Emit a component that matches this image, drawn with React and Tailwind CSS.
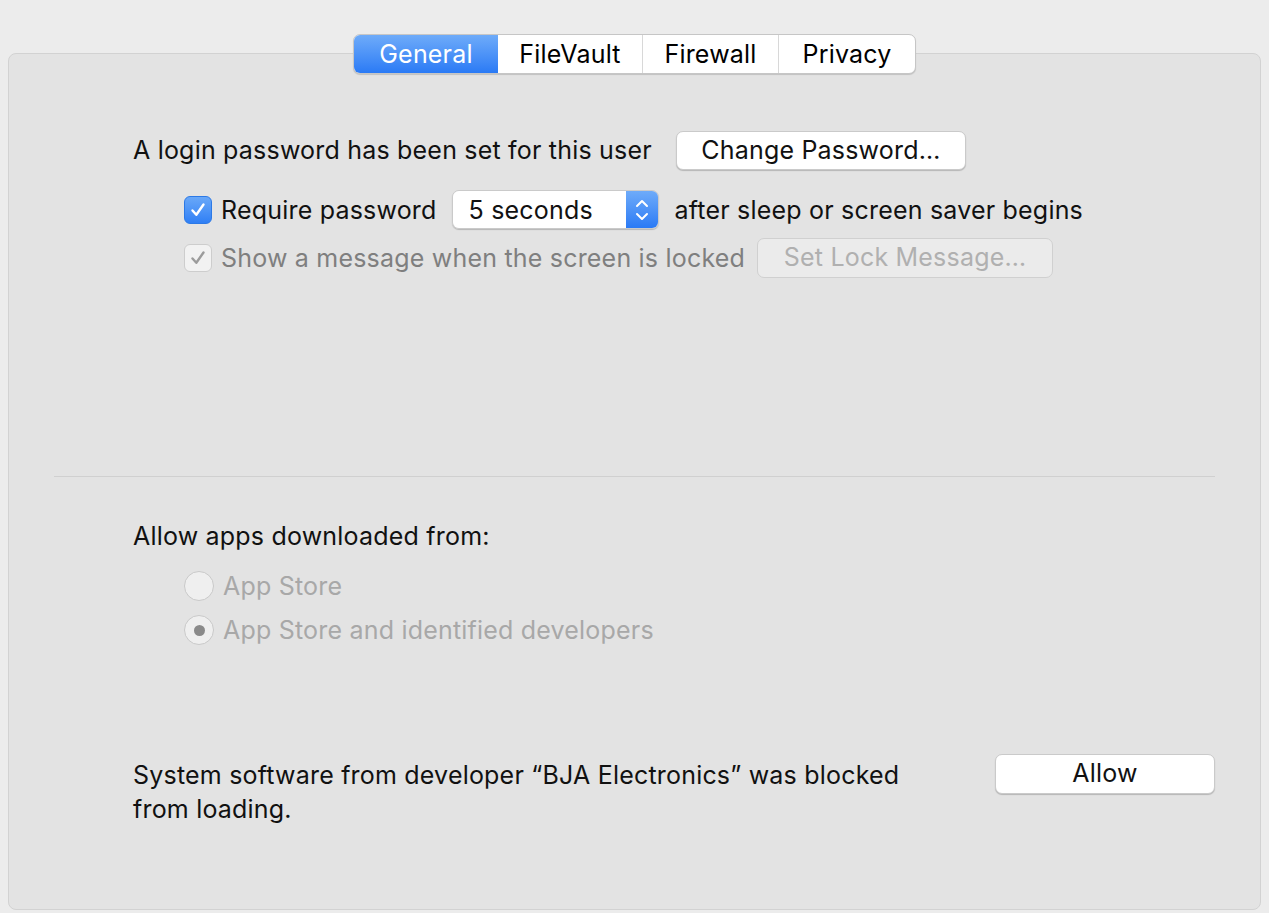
import React from "react";

const tabs = ["General", "FileVault", "Firewall", "Privacy"];
const tabWidths = ["w-[144px]", "w-[144px]", "w-[136px]", "w-[137px]"];

function Checkbox({ disabled }) {
  return (
    <div
      className={
        "w-[28px] h-[28px] rounded-[6px] flex items-center justify-center shrink-0 " +
        (disabled
          ? "bg-[#f2f2f2] border border-[#cdcdcd]"
          : "bg-gradient-to-b from-[#69a8f8] to-[#2f7ff5] border border-[#2c79e6]")
      }
    >
      <svg width="18" height="18" viewBox="0 0 18 18">
        <path
          d="M3.5 9.5 L7.3 13.8 L14.5 3.5"
          fill="none"
          stroke={disabled ? "#9c9c9c" : "#ffffff"}
          strokeWidth="2.4"
          strokeLinecap="round"
          strokeLinejoin="round"
        />
      </svg>
    </div>
  );
}

function Radio({ checked }) {
  return (
    <div className="w-[30px] h-[30px] rounded-full bg-[#efefef] border border-[#c9c9c9] flex items-center justify-center shrink-0">
      {checked && <div className="w-[11px] h-[11px] rounded-full bg-[#8a8a8a]" />}
    </div>
  );
}

export default function App() {
  return (
    <div className="h-[913px] bg-[#ececec] pt-[53px] px-[8px] font-['Inter','Liberation_Sans',Arial,sans-serif] text-[25px] tracking-[0.2px] text-[#111] overflow-hidden">
      <div className="h-[857px] bg-[#e3e3e3] border border-[#d2d2d2] rounded-[8px]">
        {/* tabs */}
        <div className="flex justify-center -mt-[20px]">
          <div className="flex h-[40px] rounded-[7px] bg-white border border-[#c6c6c6] shadow-[0_1px_1px_rgba(0,0,0,0.15)] overflow-hidden">
            {tabs.map((t, i) => (
              <div
                key={t}
                className={
                  "flex items-center justify-center pt-[2px] " +
                  tabWidths[i] +
                  (i === 0
                    ? " bg-gradient-to-b from-[#6eabf9] to-[#2a7af5] text-white"
                    : " text-black") +
                  (i > 1 ? " border-l border-[#d8d8d8]" : "")
                }
              >
                {t}
              </div>
            ))}
          </div>
        </div>

        <div className="pl-[124px] pt-[57px]">
          {/* row 1 */}
          <div className="flex items-center h-[39px]">
            <span className="mr-[24px] pt-[1px]">A login password has been set for this user</span>
            <button className="w-[290px] h-[39px] bg-white rounded-[7px] border border-[#cacaca] shadow-[0_1px_1px_rgba(0,0,0,0.2)] text-[#111]">
              Change Password…
            </button>
          </div>

          {/* row 2 */}
          <div className="flex items-center h-[39px] mt-[20px] pl-[51px]">
            <Checkbox />
            <span className="ml-[9px] pt-[2px]">Require password</span>
            <div className="ml-[15px] flex h-[39px] w-[207px] rounded-[7px] border border-[#cacaca] shadow-[0_1px_1px_rgba(0,0,0,0.2)] overflow-hidden">
              <div className="flex-1 bg-white flex items-center pl-[16px] pt-[2px]">5 seconds</div>
              <div className="w-[32px] bg-gradient-to-b from-[#6eabf9] to-[#2a7af5] flex items-center justify-center">
                <svg width="16" height="26" viewBox="0 0 16 26">
                  <path d="M3 9 L8 4 L13 9" fill="none" stroke="#fff" strokeWidth="2" strokeLinecap="round" strokeLinejoin="round" />
                  <path d="M3 17 L8 22 L13 17" fill="none" stroke="#fff" strokeWidth="2" strokeLinecap="round" strokeLinejoin="round" />
                </svg>
              </div>
            </div>
            <span className="ml-[16px] pt-[2px]">after sleep or screen saver begins</span>
          </div>

          {/* row 3 */}
          <div className="flex items-center h-[40px] mt-[9px] pl-[51px]">
            <Checkbox disabled />
            <span className="ml-[9px] pt-[2px] text-[#7f7f7f]">Show a message when the screen is locked</span>
            <button className="ml-[12px] w-[296px] h-[40px] bg-[#ebebeb] rounded-[7px] border border-[#d0d0d0] text-[#b0b0b0]">
              Set Lock Message…
            </button>
          </div>
        </div>

        {/* divider */}
        <div className="mt-[198px] mx-[45px] border-t border-[#d0d0d0]" />

        <div className="pl-[124px]">
          <div className="mt-[42px] leading-[34px]">Allow apps downloaded from:</div>
          <div className="pl-[51px] mt-[18px] flex flex-col gap-[14px] text-[#a8a8a8]">
            <div className="flex items-center h-[30px]">
              <Radio />
              <span className="ml-[9px] pt-[2px]">App Store</span>
            </div>
            <div className="flex items-center h-[30px]">
              <Radio checked />
              <span className="ml-[9px] pt-[2px]">App Store and identified developers</span>
            </div>
          </div>

          <div className="mt-[109px] flex items-start">
            <div className="w-[862px] leading-[34px] mt-[4px]">
              System software from developer “BJA Electronics” was blocked
              <br />
              from loading.
            </div>
            <button className="w-[220px] h-[40px] bg-white rounded-[7px] border border-[#cacaca] shadow-[0_1px_1px_rgba(0,0,0,0.2)] text-[#111]">
              Allow
            </button>
          </div>
        </div>
      </div>
    </div>
  );
}
